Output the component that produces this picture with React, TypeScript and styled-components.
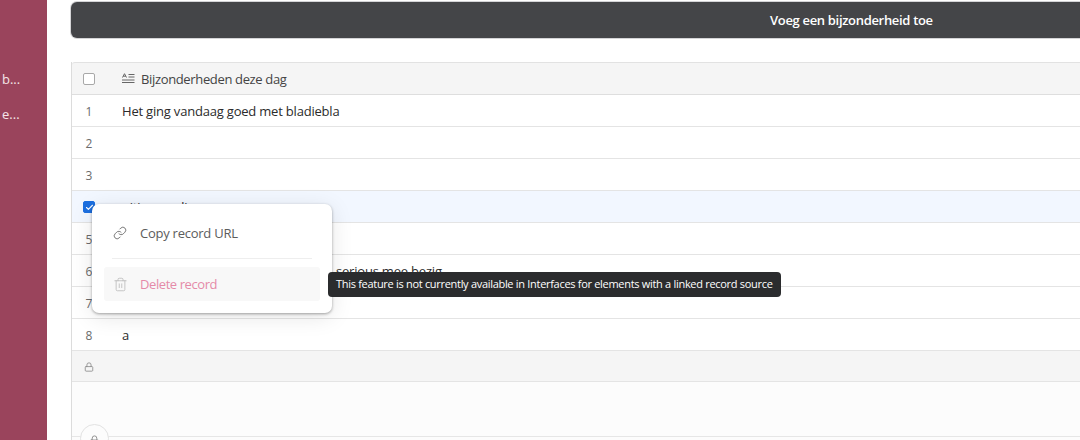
import styled, { createGlobalStyle } from "styled-components";
import { Link, Trash2, Lock, Check } from "lucide-react";

const GlobalStyle = createGlobalStyle`
  html, body {
    margin: 0;
    height: 440px;
    overflow: hidden;
    background: #fff;
    font-family: "Open Sans", "Noto Sans", sans-serif;
  }
`;

const Page = styled.div`
  display: flex;
  width: 1080px;
  height: 440px;
  overflow: hidden;
`;

const Sidebar = styled.div`
  width: 47px;
  flex: none;
  background: #9a445c;
  display: flex;
  flex-direction: column;
  align-items: flex-end;
  padding-top: 68px;
  box-sizing: border-box;
`;

const SideItem = styled.div`
  width: 47px;
  height: 35px;
  line-height: 22px;
  box-sizing: border-box;
  padding-left: 2px;
  font-size: 13px;
  font-weight: 500;
  color: #f4e4e8;
  white-space: nowrap;
`;

const Main = styled.div`
  flex: 1;
  min-width: 0;
  padding: 2px 0 0 24px;
  display: flex;
  flex-direction: column;
  position: relative;
`;

const AddButton = styled.div`
  height: 36px;
  width: 1100px;
  flex: none;
  box-sizing: border-box;
  border-radius: 6px;
  background: #444548;
  box-shadow: 0 0 0 1px #d4d4d6;
  color: #fff;
  font-size: 13px;
  font-weight: 600;
  letter-spacing: -0.32px;
  line-height: 36px;
  padding-left: 699px;
`;

const Grid = styled.div`
  margin-top: 24px;
  width: 1100px;
  height: 400px;
  flex: none;
  border-left: 1px solid #dcdcdc;
  background: #fcfcfc;
  position: relative;
`;

const Row = styled.div<{ $tone?: "head" | "selected" | "foot" }>`
  height: 32px;
  box-sizing: border-box;
  display: flex;
  align-items: center;
  border-bottom: 1px solid ${(p) => (p.$tone === "head" ? "#dedede" : "#e4e4e4")};
  background: ${(p) =>
    p.$tone === "head" || p.$tone === "foot"
      ? "#f5f5f5"
      : p.$tone === "selected"
        ? "#f2f7ff"
        : "#fff"};
`;

const HeadRow = styled(Row)`
  height: 33px;
  border-top: 1px solid #e2e2e2;
  border-top-left-radius: 3px;
`;

const FootRow = styled(Row)`
  height: 31px;
`;

const IndexCell = styled.div`
  width: 34px;
  margin-right: 16px;
  flex: none;
  display: flex;
  align-items: center;
  justify-content: center;
  padding-top: 1px;
  font-size: 12px;
  color: #6b6b6b;
`;

const TextCell = styled.div`
  display: flex;
  align-items: center;
  gap: 6px;
  font-size: 13px;
  letter-spacing: -0.2px;
  color: #2b2b2b;
  white-space: nowrap;
`;

const HeadCell = styled(TextCell)`
  letter-spacing: -0.35px;
  color: #444;
`;

/* the start of this cell's text lies under the menu in the picture */
const PartlyCoveredText = styled.span`
  padding-left: 214px;
`;

const CheckBox = styled.span<{ $on?: boolean }>`
  width: 12px;
  height: 12px;
  box-sizing: border-box;
  border-radius: 2px;
  display: flex;
  align-items: center;
  justify-content: center;
  border: 1px solid ${(p) => (p.$on ? "#1c6fe0" : "#a8a8a8")};
  background: ${(p) => (p.$on ? "#1c6fe0" : "#fff")};
  color: #fff;
`;

const CircleButton = styled.div`
  position: absolute;
  left: 8px;
  top: 362px;
  width: 29px;
  height: 29px;
  border-radius: 50%;
  border: 1px solid #e2e2e2;
  background: #fcfcfc;
  display: flex;
  justify-content: center;
  padding-top: 10px;
  box-sizing: border-box;
  color: #8a8a8a;
`;

const BottomLine = styled.div`
  position: absolute;
  left: 0;
  right: 0;
  top: 374px;
  border-top: 1px solid #e6e6e6;
`;

const Menu = styled.div`
  position: absolute;
  left: 92px;
  top: 204px;
  width: 240px;
  height: 109px;
  box-sizing: border-box;
  padding: 12px;
  background: #fff;
  border-radius: 7px;
  box-shadow: 0 1px 3px rgba(0, 0, 0, 0.35), 0 4px 22px rgba(0, 0, 0, 0.1);
`;

const MenuItem = styled.div<{ $disabled?: boolean }>`
  height: 34px;
  display: flex;
  align-items: center;
  gap: ${(p) => (p.$disabled ? "12px" : "13px")};
  padding-left: 9px;
  border-radius: 3px;
  font-size: 13px;
  letter-spacing: ${(p) => (p.$disabled ? "-0.42px" : "-0.25px")};
  color: ${(p) => (p.$disabled ? "#e58aa8" : "#5c5c5c")};
  background: ${(p) => (p.$disabled ? "#f8f8f8" : "transparent")};
  svg {
    color: ${(p) => (p.$disabled ? "#b4b4b4" : "#5e5e5e")};
  }
`;

const MenuDivider = styled.div`
  height: 1px;
  background: #eeeeee;
  margin: 8px;
`;

const Tooltip = styled.div`
  position: absolute;
  left: 328px;
  top: 272px;
  height: 25px;
  line-height: 24px;
  box-sizing: border-box;
  padding: 0 8px;
  border-radius: 4px;
  background: #2b2c2e;
  color: #fff;
  font-size: 11px;
  letter-spacing: -0.3px;
  white-space: nowrap;
`;

const FieldIcon = () => (
  <svg width="13" height="11" viewBox="0 0 13 11" fill="none" stroke="#666" strokeWidth="1">
    <path d="M0.5 4.5 L2.5 0.7 L4.5 4.5 M1.2 3.2 H3.8" />
    <path d="M6.5 1.5 H12.5 M6.5 4 H12.5 M0 7 H12.5 M0 9.5 H12.5" />
  </svg>
);

const rows: [string, string][] = [
  ["1", "Het ging vandaag goed met bladiebla"],
  ["2", ""],
  ["3", ""],
];

export default function App() {
  return (
    <Page>
      <GlobalStyle />
      <Sidebar>
        <SideItem>b...</SideItem>
        <SideItem>e...</SideItem>
      </Sidebar>
      <Main>
        <AddButton>Voeg een bijzonderheid toe</AddButton>
        <Grid>
          <HeadRow $tone="head">
            <IndexCell>
              <CheckBox />
            </IndexCell>
            <HeadCell>
              <FieldIcon />
              Bijzonderheden deze dag
            </HeadCell>
          </HeadRow>
          {rows.map(([n, t]) => (
            <Row key={n}>
              <IndexCell>{n}</IndexCell>
              <TextCell>{t}</TextCell>
            </Row>
          ))}
          <Row $tone="selected">
            <IndexCell>
              <CheckBox $on>
                <Check size={9} strokeWidth={3} />
              </CheckBox>
            </IndexCell>
            <TextCell>nitje maadje</TextCell>
          </Row>
          <Row>
            <IndexCell>5</IndexCell>
            <TextCell />
          </Row>
          <Row>
            <IndexCell>6</IndexCell>
            <TextCell>
              <PartlyCoveredText>serious mee bezig</PartlyCoveredText>
            </TextCell>
          </Row>
          <Row>
            <IndexCell>7</IndexCell>
            <TextCell />
          </Row>
          <Row>
            <IndexCell>8</IndexCell>
            <TextCell>a</TextCell>
          </Row>
          <FootRow $tone="foot">
            <IndexCell>
              <Lock size={10} color="#8a8a8a" />
            </IndexCell>
          </FootRow>
          <BottomLine />
          <CircleButton>
            <Lock size={11} />
          </CircleButton>
        </Grid>
      </Main>
      <Menu>
        <MenuItem>
          <Link size={14} strokeWidth={1.4} />
          Copy record URL
        </MenuItem>
        <MenuDivider />
        <MenuItem $disabled>
          <Trash2 size={15} strokeWidth={1.2} />
          Delete record
        </MenuItem>
      </Menu>
      <Tooltip>This feature is not currently available in Interfaces for elements with a linked record source</Tooltip>
    </Page>
  );
}
